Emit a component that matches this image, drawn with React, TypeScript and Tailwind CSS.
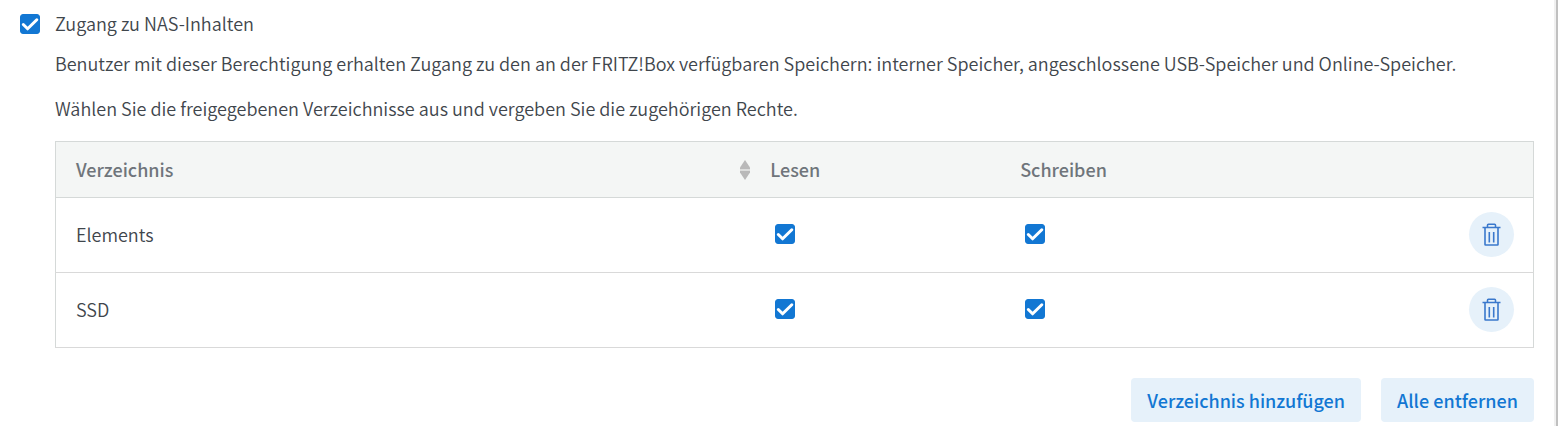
import React, { useState } from 'react';

interface Directory {
  name: string;
  read: boolean;
  write: boolean;
}

interface CheckboxProps {
  id: string;
  label?: string;
  checked: boolean;
  onChange: (checked: boolean) => void;
}

const Checkbox: React.FC<CheckboxProps> = ({ id, label, checked, onChange }) => (
  <span className="inline-grid h-5 w-5 shrink-0">
    <input
      type="checkbox"
      id={id}
      aria-label={label}
      checked={checked}
      onChange={(e) => onChange(e.target.checked)}
      className="col-start-1 row-start-1 h-5 w-5 appearance-none rounded-[3px] border border-[#1277d3] bg-white checked:bg-[#1277d3]"
    />
    {checked && (
      <svg viewBox="0 0 20 20" className="pointer-events-none col-start-1 row-start-1 h-5 w-5" fill="none" aria-hidden="true">
        <path d="M3.3 10.5L7.6 14.8L16.8 5.8" stroke="#fff" strokeWidth="3" strokeLinecap="round" strokeLinejoin="round" />
      </svg>
    )}
  </span>
);

const SortIcon = () => (
  <svg viewBox="0 0 10 20" className="h-5 w-[10px]" fill="#b9b9b9" aria-hidden="true">
    <path d="M0 9h10v2H0z" fill="#dcdddc" />
    <path d="M5 0L10 7.5V9H0V7.5z" />
    <path d="M5 20L10 12.5V11H0V12.5z" />
  </svg>
);

const TrashIcon = () => (
  <svg viewBox="0 0 19 23" className="h-[23px] w-[19px]" fill="none" stroke="#3a78cc" strokeWidth="1.6" aria-hidden="true">
    <path d="M0.5 4.5h18M5.5 4.5V2.2q0-.9.9-.9h6.200q.9 0 .9.9v2.300M3 4.500V21.500q0 .5.5.5h12q.5 0 .5-.5V4.500M7.300 9v10.500M11.700 9v10.500" />
  </svg>
);

export default function App() {
  const [access, setAccess] = useState(true);
  const [directories, setDirectories] = useState<Directory[]>([
    { name: 'Elements', read: true, write: true },
    { name: 'SSD', read: true, write: true },
  ]);

  const update = (name: string, change: Partial<Directory>) =>
    setDirectories((prev) => prev.map((d) => (d.name === name ? { ...d, ...change } : d)));

  return (
    <div className="min-h-screen border-r-2 border-[#c0c0c0] bg-white font-['Noto_Sans_CJK_SC',sans-serif] text-[18px] leading-[25px] font-[350] text-[#3f464c]">
      <main className="min-h-screen border-r-2 border-[#f0f0f0] px-5 pt-[11px]">
        <div className="flex items-center gap-[15px]">
          <Checkbox id="nas-access" checked={access} onChange={setAccess} />
          <label htmlFor="nas-access">Zugang zu NAS-Inhalten</label>
        </div>
        <div className="pl-[35px]">
          <p className="mt-[15px]">
            Benutzer mit dieser Berechtigung erhalten Zugang zu den an der FRITZ!Box verfügbaren Speichern: interner
            Speicher, angeschlossene USB-Speicher und Online-Speicher.
          </p>
          <p className="mt-5">
            Wählen Sie die freigegebenen Verzeichnisse aus und vergeben Sie die zugehörigen Rechte.
          </p>
          <table className="mt-5 w-full table-fixed border-collapse border border-[#d5d9d8] text-left">
            <thead>
              <tr className="h-14 border-b border-[#d5d9d8] bg-[#f4f6f5] text-[#6f757b]">
                <th className="w-[47%] pl-5 font-medium">
                  <div className="flex items-center justify-between">
                    Verzeichnis
                    <SortIcon />
                  </div>
                </th>
                <th className="w-[250px] pl-5 font-medium">Lesen</th>
                <th className="pl-5 font-medium">Schreiben</th>
                <td className="w-[85px]" />
              </tr>
            </thead>
            <tbody>
              {directories.map((d) => (
                <tr key={d.name} className="h-[75px] border-b border-[#d9d9d9]">
                  <td className="pb-0.5 pl-5">{d.name}</td>
                  <td className="pb-0.5 pl-[25px]">
                    <div className="flex">
                      <Checkbox
                        id={`read-${d.name}`}
                        label={`${d.name} Lesen`}
                        checked={d.read}
                        onChange={(read) => update(d.name, { read })}
                      />
                    </div>
                  </td>
                  <td className="pb-0.5 pl-[25px]">
                    <div className="flex">
                      <Checkbox
                        id={`write-${d.name}`}
                        label={`${d.name} Schreiben`}
                        checked={d.write}
                        onChange={(write) => update(d.name, { write })}
                      />
                    </div>
                  </td>
                  <td className="pr-[19px] pb-0.5">
                    <button
                      type="button"
                      aria-label={`${d.name} entfernen`}
                      onClick={() => setDirectories((prev) => prev.filter((p) => p.name !== d.name))}
                      className="ml-auto flex h-[45px] w-[45px] items-center justify-center rounded-full bg-[#e6f1fa]"
                    >
                      <TrashIcon />
                    </button>
                  </td>
                </tr>
              ))}
            </tbody>
          </table>
          <div className="mt-[30px] flex justify-end gap-5 font-medium text-[#1277d3]">
            <button type="button" className="h-11 rounded bg-[#e6f1fa] px-4">
              Verzeichnis hinzufügen
            </button>
            <button type="button" onClick={() => setDirectories([])} className="h-11 rounded bg-[#e6f1fa] px-4">
              Alle entfernen
            </button>
          </div>
        </div>
      </main>
    </div>
  );
}
